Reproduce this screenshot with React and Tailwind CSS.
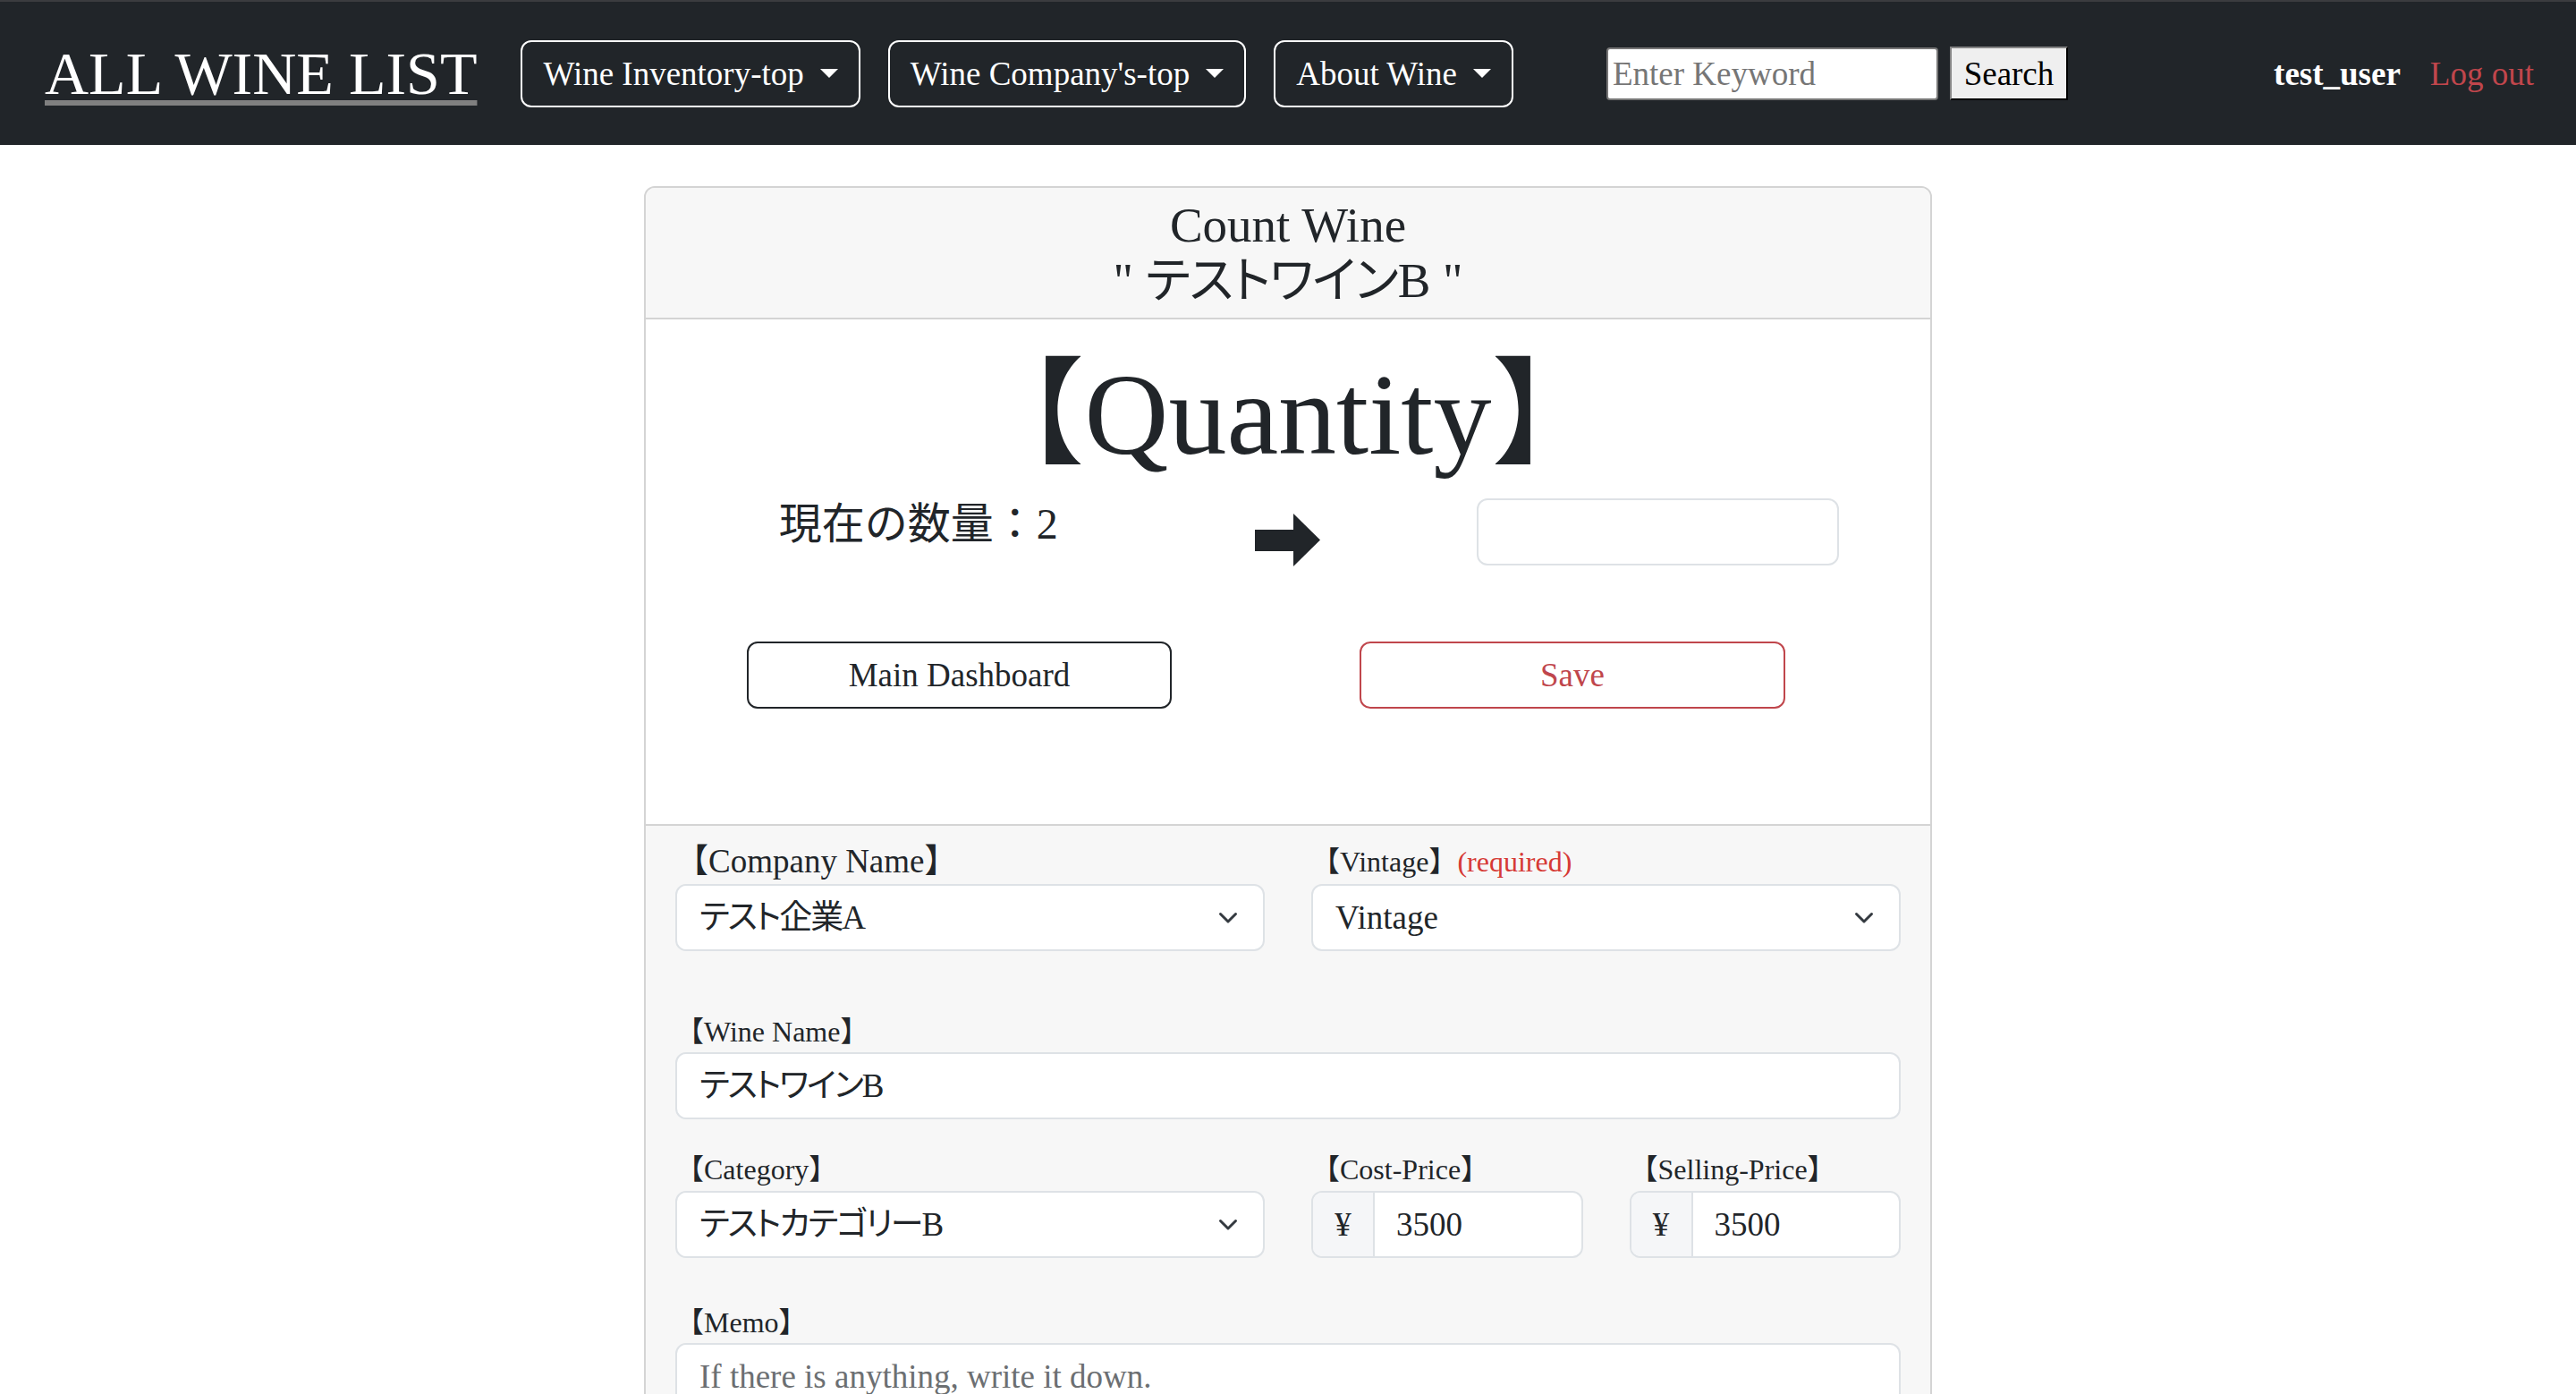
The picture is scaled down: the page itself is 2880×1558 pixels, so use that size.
import React from "react";

const K = ({ children, className = "tracking-[-2px]" }) => (
  <span className={"[font-feature-settings:'palt'] " + className}>{children}</span>
);

function Caret() {
  return (
    <span className="ml-[18px] inline-block h-0 w-0 border-x-[10px] border-t-[10px] border-x-transparent border-t-white" />
  );
}

function NavBtn({ children }) {
  return (
    <button className="flex h-[75px] items-center rounded-[12px] border-2 border-white px-[23px] text-[37px] leading-none text-white">
      {children}
      <Caret />
    </button>
  );
}

function Chevron() {
  return (
    <svg width="22" height="14" viewBox="0 0 22 14" className="shrink-0">
      <path
        d="M2.5 2.5 L11 11 L19.5 2.5"
        stroke="#343a40"
        strokeWidth="3"
        fill="none"
        strokeLinecap="round"
        strokeLinejoin="round"
      />
    </svg>
  );
}

function SelectBox({ children }) {
  return (
    <div className="flex h-[75px] items-center justify-between rounded-[12px] border-2 border-[#dee2e6] bg-white pl-[25px] pr-[28px] text-[37px] leading-none">
      <span>{children}</span>
      <Chevron />
    </div>
  );
}

function Label({ children, className = "text-[32px]" }) {
  return <div className={"h-[40px] leading-[40px] " + className}>{children}</div>;
}

function YenInput({ value }) {
  return (
    <div className="flex h-[75px] overflow-hidden rounded-[12px] border-2 border-[#dee2e6] bg-white text-[37px] leading-none">
      <div className="flex w-[69px] items-center justify-center border-r-2 border-[#dee2e6] bg-[#f5f6f8]">
        ¥
      </div>
      <div className="flex items-center pl-[24px]">{value}</div>
    </div>
  );
}

function Arrow() {
  return (
    <svg width="73" height="59" viewBox="0 0 73 59">
      <rect x="0" y="18" width="44" height="24" fill="#212529" />
      <polygon points="43,0 73,29.5 43,59" fill="#212529" />
    </svg>
  );
}

export default function App() {
  return (
    <div className="min-h-screen bg-white font-['Liberation_Serif','Noto_Sans_CJK_JP',serif] text-[#212529]">
      {/* Navbar */}
      <nav className="flex h-[162px] items-center border-t-2 border-[#3b3c3f] bg-[#212529] pl-[50px] pr-[47px]">
        <a className="text-[68px] leading-[68px] text-white underline decoration-[#808080] decoration-[6px] underline-offset-[7px]">
          ALL WINE LIST
        </a>
        <div className="ml-[49px] flex gap-[31px]">
          <NavBtn>Wine Inventory-top</NavBtn>
          <NavBtn>Wine Company's-top</NavBtn>
          <NavBtn>About Wine</NavBtn>
        </div>
        <input
          className="ml-[104px] h-[59px] w-[371px] rounded-[4px] border-2 border-[#767676] bg-white px-[5px] text-[37px] text-black outline-none placeholder:text-[#767676]"
          placeholder="Enter Keyword"
        />
        <button className="ml-[13px] h-[60px] w-[132px] border-2 border-b-black border-l-[#858585] border-r-black border-t-[#858585] bg-[#efefef] text-[37px] leading-none text-black">
          Search
        </button>
        <div className="ml-auto flex items-center gap-[33px] text-[37px] leading-none">
          <span className="font-bold text-white">test_user</span>
          <a className="text-[#c0464c]">Log out</a>
        </div>
      </nav>

      {/* Card */}
      <div className="mx-auto mt-[46px] w-[1440px] overflow-hidden rounded-[12px] border-2 border-[#d4d4d4]">
        <div className="border-b-2 border-[#d4d4d4] bg-[#f7f7f7] pb-[10px] pt-[11px] text-center text-[55px] leading-[62px]">
          <div>Count Wine</div>
          <div>
            " <K className="tracking-[-1px]">テストワイン</K>B "
          </div>
        </div>

        <div className="bg-white pb-[129px] pt-[36px]">
          <div className="text-center text-[130px] leading-[140px]">【Quantity】</div>
          <div className="mx-auto mt-[24px] grid w-[1240px] grid-cols-3 items-start">
            <div className="text-center text-[48px] leading-[58px]">現在の数量：2</div>
            <div className="mt-[17px] flex justify-center">
              <Arrow />
            </div>
            <div className="flex justify-center">
              <input className="h-[75px] w-[405px] rounded-[12px] border-2 border-[#dee2e6] bg-white outline-none" />
            </div>
          </div>
          <div className="ml-[113px] mt-[84px] flex gap-[210px]">
            <button className="h-[75px] w-[475px] rounded-[12px] border-2 border-[#212529] bg-white text-[37px] leading-none text-[#212529]">
              Main Dashboard
            </button>
            <button className="h-[75px] w-[476px] rounded-[12px] border-2 border-[#c0464c] bg-white text-[37px] leading-none text-[#c0464c]">
              Save
            </button>
          </div>
        </div>

        <div className="border-t-2 border-[#d4d4d4] bg-[#f7f7f7] px-[33px] pb-[60px] pt-[20px]">
          <div className="grid grid-cols-2 gap-x-[52px]">
            <div>
              <Label className="text-[37px]">【Company Name】</Label>
              <div className="mt-[5px]">
                <SelectBox>
                  <K>テスト企業</K>A
                </SelectBox>
              </div>
            </div>
            <div>
              <Label>
                【Vintage】<span className="text-[#d63a35]">(required)</span>
              </Label>
              <div className="mt-[5px]">
                <SelectBox>Vintage</SelectBox>
              </div>
            </div>
          </div>

          <div className="mt-[70px]">
            <Label>【Wine Name】</Label>
            <div className="mt-[3px] flex h-[75px] items-center rounded-[12px] border-2 border-[#dee2e6] bg-white pl-[25px] text-[37px] leading-none">
              <K>テストワイン</K>B
            </div>
          </div>

          <div className="mt-[36px] grid grid-cols-[659px_1fr_1fr] gap-x-[52px]">
            <div>
              <Label>【Category】</Label>
              <div className="mt-[4px]">
                <SelectBox>
                  <K>テストカテゴリー</K>B
                </SelectBox>
              </div>
            </div>
            <div>
              <Label>【Cost-Price】</Label>
              <div className="mt-[4px]">
                <YenInput value="3500" />
              </div>
            </div>
            <div>
              <Label>【Selling-Price】</Label>
              <div className="mt-[4px]">
                <YenInput value="3500" />
              </div>
            </div>
          </div>

          <div className="mt-[52px]">
            <Label>【Memo】</Label>
            <textarea
              className="mt-[3px] block h-[220px] w-full resize-none rounded-[12px] border-2 border-[#dee2e6] bg-white px-[25px] pt-[8px] text-[37px] leading-[55px] outline-none placeholder:text-[#6c6f72]"
              placeholder="If there is anything, write it down."
            />
          </div>
        </div>
      </div>
    </div>
  );
}
